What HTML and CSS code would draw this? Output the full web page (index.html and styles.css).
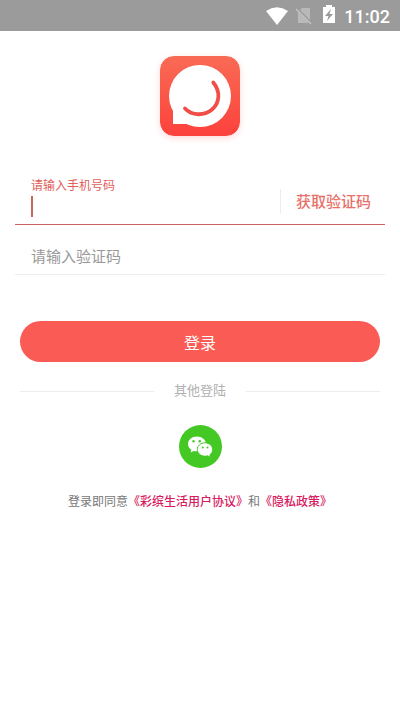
FILE: index.html
```html
<!DOCTYPE html>
<html lang="zh-CN">
<head>
<meta charset="utf-8">
<meta name="viewport" content="width=device-width, initial-scale=1">
<title>登录</title>
<link rel="stylesheet" href="styles.css">
</head>
<body>
<header class="status-bar">
  <svg width="22" height="18" viewBox="0 0 22 18" aria-hidden="true"><path fill="#fff" d="M0 4Q11-3.400 22 4L11 18Z"/></svg>
  <svg class="status-sim" width="16" height="18" viewBox="0 0 16 18" aria-hidden="true"><path fill="#b9b9b9" d="M2 5 6 1h8v15H2Z"/><path d="M0 1 16 17" stroke="#9b9b9b" stroke-width="3"/><path d="M0 2 15 17" stroke="#c6c6c6" stroke-width="1.300"/></svg>
  <svg class="status-battery" width="12" height="18" viewBox="0 0 12 18" aria-hidden="true"><path fill="#fff" d="M0 2h3V0h6v2h3v16H0Z"/><path fill="#9b9b9b" d="M8 4 2 11h3.500L4 16l6-7H6.500Z"/></svg>
  <span class="status-time">11:02</span>
</header>
<main class="page">
  <svg class="logo" viewBox="0 0 80 80" role="img" aria-label="彩缤生活">
    <defs><linearGradient id="brand" x1="0" y1="0" x2="0" y2="1"><stop offset="0" stop-color="#f96b55"/><stop offset="1" stop-color="#fc423c"/></linearGradient></defs>
    <rect width="80" height="80" rx="14" fill="url(#brand)"/>
    <circle cx="40" cy="40" r="31" fill="#fff"/>
    <path fill="#fff" d="M13 52V68H30L36 50Z"/>
    <path fill="none" stroke="#f04e47" stroke-width="3.800" stroke-linecap="round" d="M53.300 26.500C61 36 59.500 47 52 53.500C44 60 32 60 25 52.500"/>
  </svg>
  <form class="login-form">
    <div class="field field-phone">
      <div class="field-body">
        <label class="floating-label" for="phone">请输入手机号码</label>
        <div class="input-wrap"><span class="caret"></span><input class="input" id="phone" type="tel"></div>
      </div>
      <button class="send-code" type="button">获取验证码</button>
    </div>
    <div class="field field-code">
      <input class="input" type="text" placeholder="请输入验证码" aria-label="请输入验证码">
    </div>
    <button class="submit" type="submit">登录</button>
  </form>
  <div class="other-login">其他登陆</div>
  <button class="wechat" type="button" aria-label="微信">
    <svg class="wechat-icon" viewBox="0 0 43 43" aria-hidden="true">
      <path fill="#fff" d="M18 11.500c-5 0-9 3.300-9 7.400 0 2.400 1.300 4.500 3.400 5.800l-.9 2.900 3.300-1.700c1 .3 2.100.4 3.200.4 5 0 9-3.300 9-7.400s-4-7.400-9-7.400Z"/>
      <path fill="#fff" stroke="#43c824" stroke-width="1" d="M26 17.800c-4.300 0-7.700 3-7.700 6.700s3.400 6.700 7.700 6.700c.9 0 1.800-.1 2.600-.4l3 1.600-.7-2.600c1.700-1.200 2.800-3.100 2.800-5.300 0-3.700-3.400-6.700-7.700-6.700Z"/>
      <g fill="#43c824"><circle cx="14.500" cy="16.200" r="1.200"/><circle cx="20.700" cy="16.200" r="1.200"/><circle cx="23.700" cy="22.500" r="1"/><circle cx="28.500" cy="22.500" r="1"/></g>
    </svg>
  </button>
  <p class="terms">登录即同意<a class="terms-link" href="#terms">《彩缤生活用户协议》</a>和<a class="terms-link" href="#privacy">《隐私政策》</a></p>
</main>
</body>
</html>
```
FILE: styles.css
```css
* {
  box-sizing: border-box;
}

body {
  margin: 0;
  background: #fff;
  font-family: Roboto, "Noto Sans CJK SC", sans-serif;
}

button,
input {
  margin: 0;
  padding: 0;
  border: 0;
  outline: 0;
  background: none;
  font-family: inherit;
}

.status-bar {
  display: flex;
  align-items: center;
  justify-content: flex-end;
  height: 31px;
  padding-right: 10px;
  background: #9b9b9b;
  color: #fff;
}

.status-sim {
  margin-left: 8px;
}

.status-battery {
  margin: 0 9px 4px 11px;
}

.status-time {
  padding-top: 2px;
  font-size: 18px;
  font-weight: 500;
  line-height: 24px;
}

.page {
  display: flex;
  flex-direction: column;
  align-items: center;
  padding: 25px 15px;
}

.logo {
  width: 80px;
  height: 80px;
  border-radius: 14px;
  box-shadow: 0 2px 6px rgba(252, 66, 60, 0.2);
}

.login-form {
  width: 100%;
  margin-top: 40px;
}

.field {
  display: flex;
  align-items: center;
  padding-left: 16px;
  border-bottom: 1px solid #ededed;
}

.field-phone {
  border-color: #c9645f;
}

.field-body {
  flex: 1;
  min-width: 0;
}

.floating-label {
  display: block;
  font-size: 12px;
  line-height: 20px;
  color: #e2605a;
}

.input-wrap {
  position: relative;
  height: 28px;
}

.caret {
  position: absolute;
  top: 0;
  left: 0;
  width: 2px;
  height: 21px;
  background: #c9645f;
}

.input {
  display: block;
  width: 100%;
  height: 28px;
  font-size: 15px;
  color: #333;
}

.input::placeholder {
  color: #999;
  opacity: 1;
}

.send-code {
  height: 25px;
  margin-top: 2px;
  padding: 2px 14px 0 15px;
  border-left: 1px solid #ededed;
  font-size: 15px;
  font-weight: 500;
  line-height: 23px;
  color: #e8706a;
}

.field-code {
  padding-top: 18px;
  padding-bottom: 3px;
}

.submit {
  display: block;
  width: calc(100% - 10px);
  height: 41px;
  margin: 46px 5px 0;
  border-radius: 21px;
  background: #fb5b55;
  font-size: 16px;
  color: #fff;
}

.other-login {
  display: flex;
  align-items: center;
  align-self: stretch;
  gap: 20px;
  margin: 19px 5px 0;
  font-size: 13px;
  line-height: 20px;
  color: #b0b0b0;
}

.other-login::before,
.other-login::after {
  content: "";
  flex: 1;
  height: 1px;
  background: #ededed;
}

.wechat {
  width: 43px;
  height: 43px;
  margin-top: 24px;
  border-radius: 50%;
  background: #43c824;
}

.wechat-icon {
  display: block;
  width: 100%;
}

.terms {
  margin: 24px 0 0;
  font-size: 12px;
  line-height: 20px;
  color: #777;
}

.terms-link {
  font-weight: 500;
  color: #d81b60;
  text-decoration: none;
}
```
